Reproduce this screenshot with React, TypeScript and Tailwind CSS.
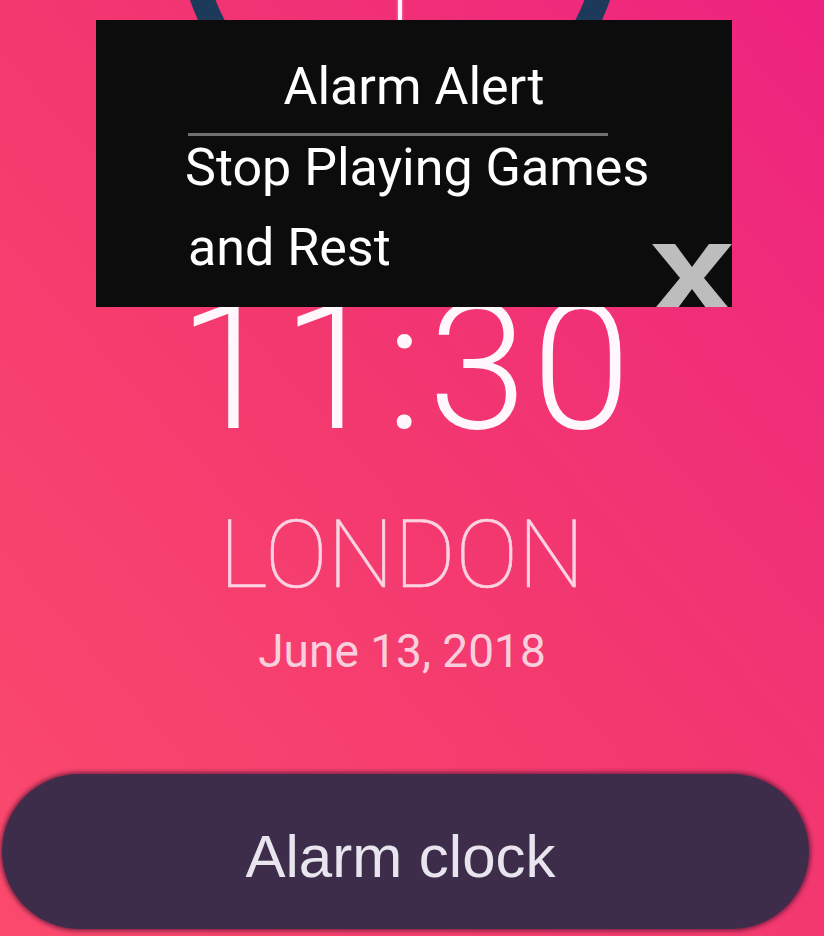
export default function App() {
  return (
    <div className="relative w-[824px] h-[936px] overflow-hidden bg-linear-to-bl from-[#ee2280] via-[#f3386f] to-[#fb4a6d]">
      <div className="flex flex-col items-center pr-[20px]">

        {/* Clock dial */}
        <div className="relative w-[444px] h-[444px] -mt-[294px] ml-[-4px] rounded-full border-[24px] border-[#1e3a5a]">
          <div className="absolute left-1/2 top-[180px] h-[160px] w-[4px] -ml-[2px] bg-[#fff2f8] shadow-[0_0_3px_#ff9ccc]" />
        </div>

        {/* Time */}
        <p className="mt-[147px] ml-[10px] text-[178px] leading-[140px] tracking-[5px] font-light text-[#fff7fb] font-['Roboto',sans-serif]">11:30</p>

        {/* City */}
        <p className="mt-[71px] text-[94px] leading-none font-thin text-[#fbd3e2] font-['Roboto',sans-serif] [-webkit-text-stroke:0.6px_#fbd3e2]">LONDON</p>

        {/* Date */}
        <p className="mt-[26px] text-[46px] leading-none text-[#f9cfdd] font-['Roboto',sans-serif]">June 13, 2018</p>

        {/* Button */}
        <div className="mt-[100px] self-start ml-[2px] w-[807px] h-[155px] rounded-full bg-[#3d2d4b] shadow-[0_0_4px_2px_rgba(80,20,50,0.7)] flex items-center justify-center pt-[10px] pr-[10px]">
          <span className="text-[60px] leading-none text-[#e9e5ee] font-['Liberation_Sans',Arial,sans-serif]">Alarm clock</span>
        </div>
      </div>

      {/* Alert overlay */}
      <div className="absolute left-[96px] top-[20px] w-[636px] h-[287px] overflow-hidden bg-[#0d0c0d] font-['Roboto',sans-serif] text-white">
        <p className="pt-[36px] text-center text-[52px] leading-[61px]">Alarm Alert</p>
        <div className="mt-[16px] ml-[92px] w-[420px] h-[3px] bg-[#707070]" />
        <p className="-mt-[8px] ml-[89px] text-[52px] leading-[80px]">
          Stop Playing Games
          <br />
          <span className="ml-[3px]">and Rest</span>
        </p>
        <svg className="absolute left-[556px] top-[224px]" width="80" height="68" viewBox="0 0 80 68">
          <polygon points="0,0 23,0 40,23 57,0 80,0 52,34 80,68 57,68 40,45 23,68 0,68 28,34" fill="#bdbdbd" />
        </svg>
      </div>
    </div>
  )
}
